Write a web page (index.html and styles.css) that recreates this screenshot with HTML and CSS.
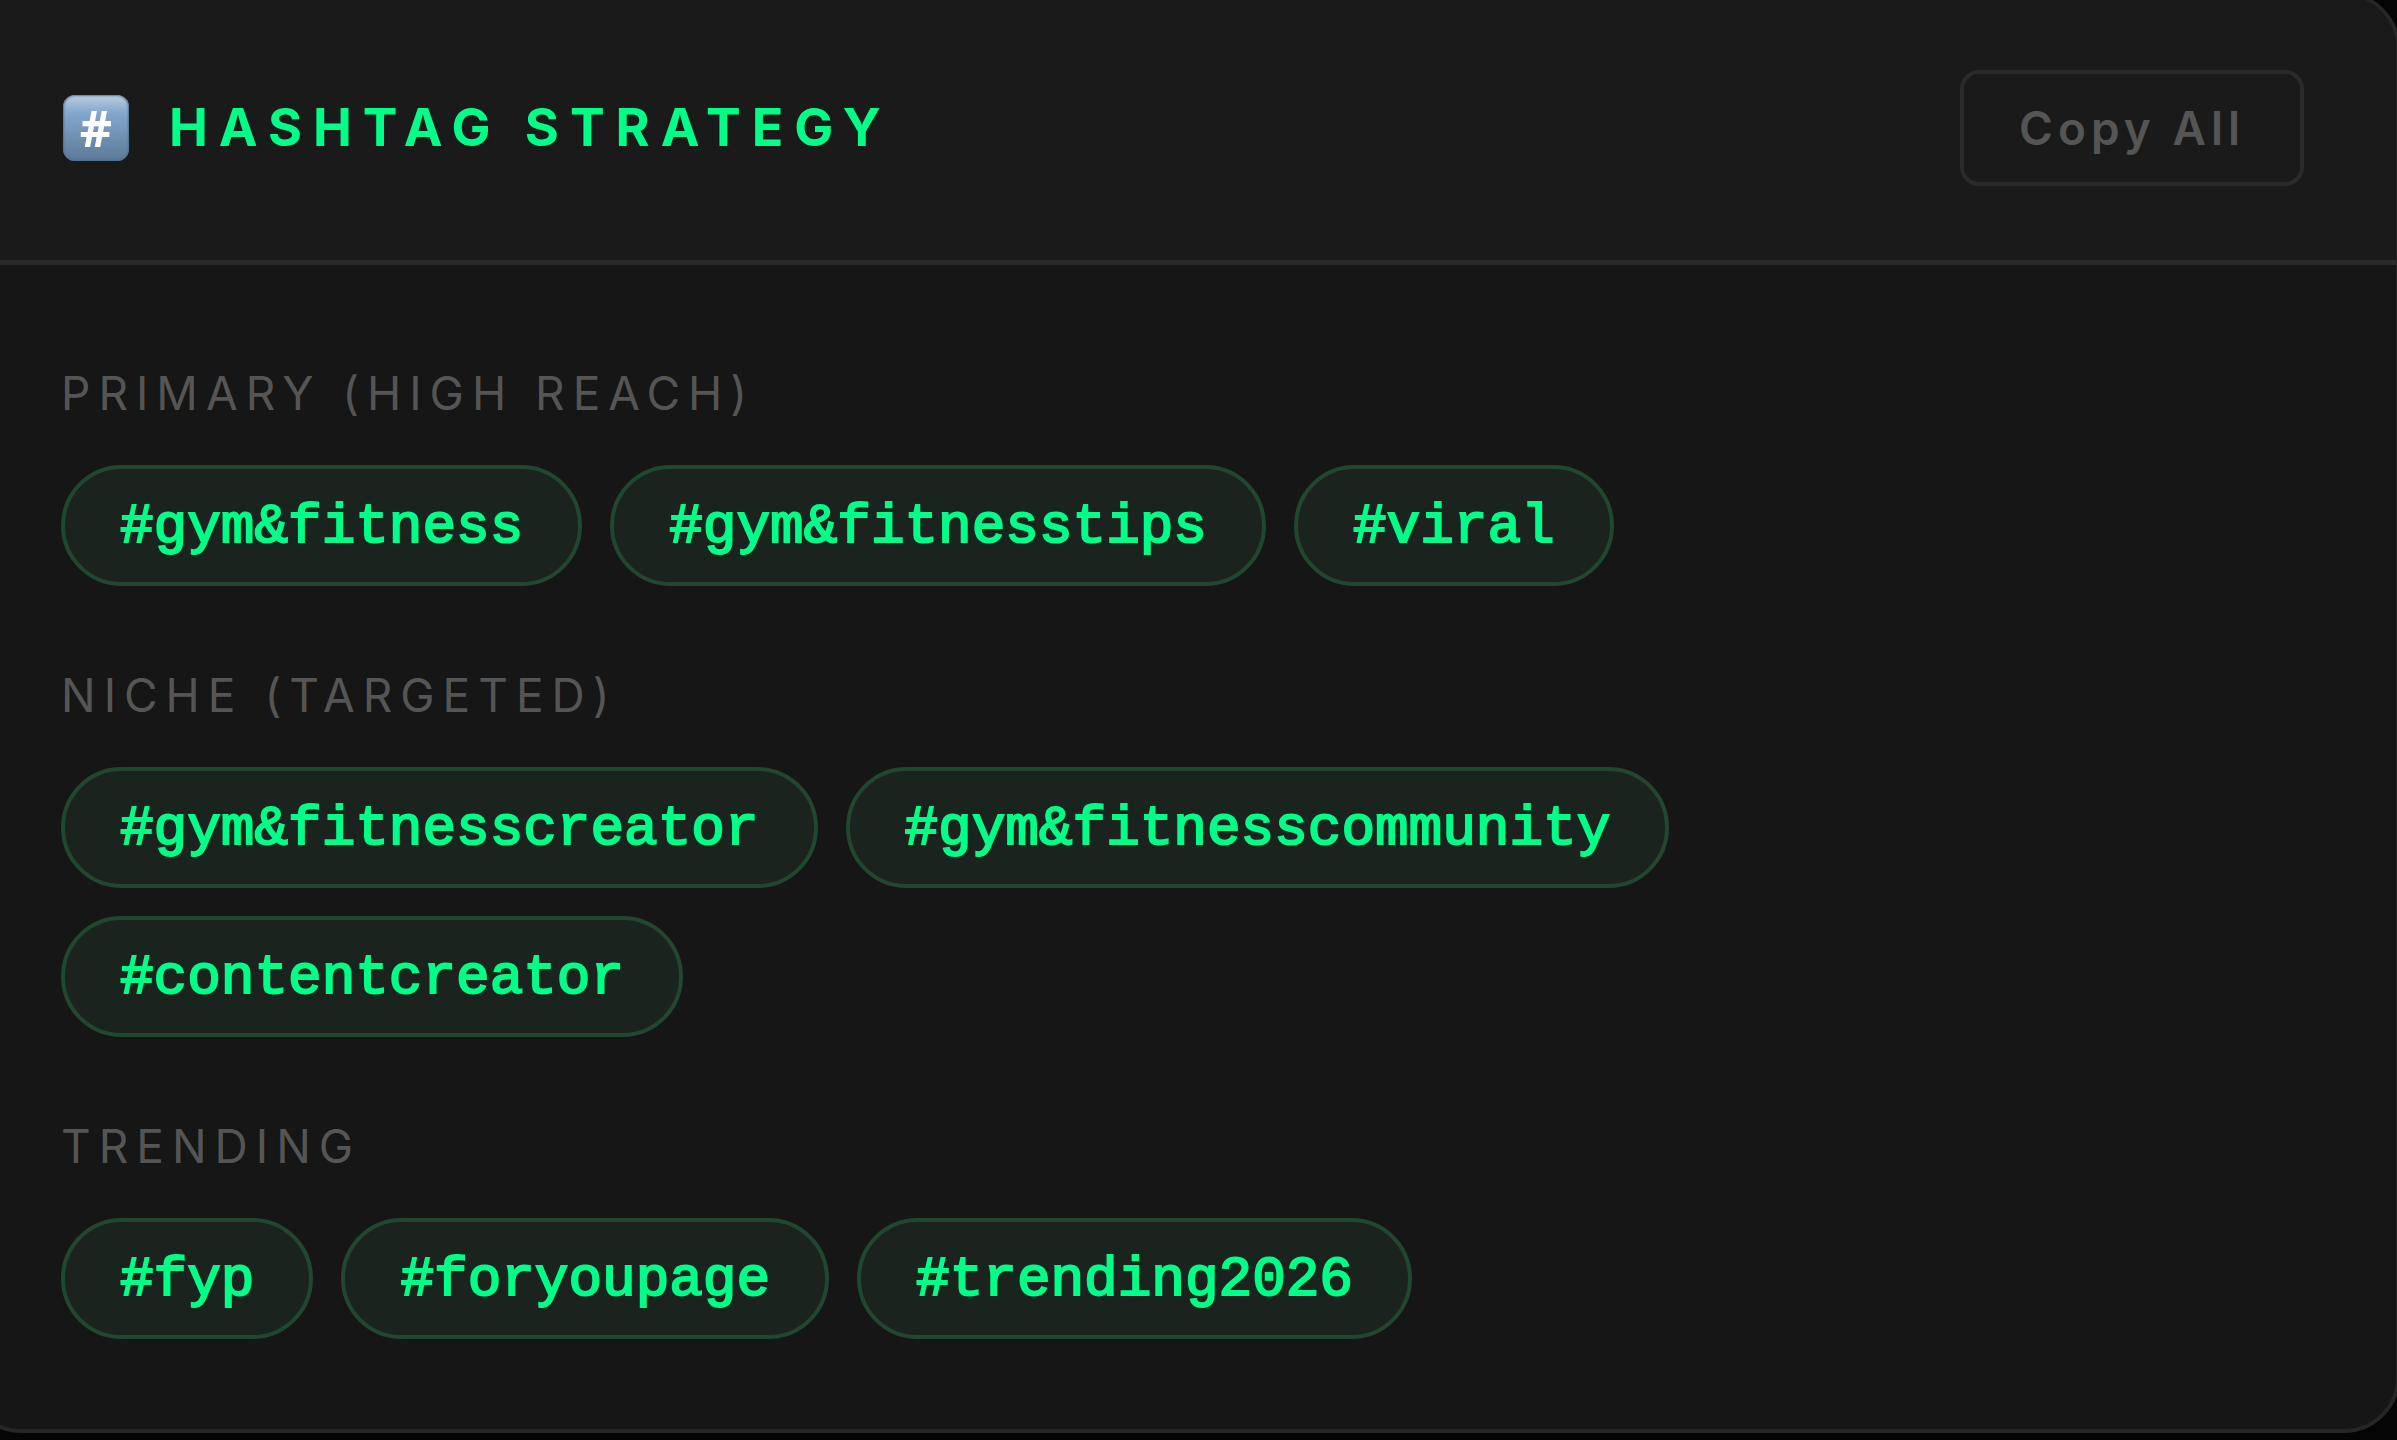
FILE: index.html
```html
<!DOCTYPE html>
<html lang="en">
  <head>
    <meta charset="UTF-8" />
    <title>Hashtag Strategy</title>
    <link rel="stylesheet" href="styles.css">
  </head>

  <body>
    <section class="card">
      <div class="card-header">
        <h2 class="card-title"><span class="keycap">#</span>HASHTAG STRATEGY</h2>
        <button type="button" class="copy-btn">Copy All</button>
      </div>
      <div class="card-body">
        <div class="group">
          <h3 class="group-label">PRIMARY (HIGH REACH)</h3>
          <div class="tags">
            <span class="tag">#gym&amp;fitness</span>
            <span class="tag">#gym&amp;fitnesstips</span>
            <span class="tag">#viral</span>
          </div>
        </div>
        <div class="group">
          <h3 class="group-label">NICHE (TARGETED)</h3>
          <div class="tags">
            <span class="tag">#gym&amp;fitnesscreator</span>
            <span class="tag">#gym&amp;fitnesscommunity</span>
            <span class="tag">#contentcreator</span>
          </div>
        </div>
        <div class="group">
          <h3 class="group-label">TRENDING</h3>
          <div class="tags">
            <span class="tag">#fyp</span>
            <span class="tag">#foryoupage</span>
            <span class="tag">#trending2026</span>
          </div>
        </div>
      </div>
    </section>
  </body>
</html>
```
FILE: styles.css
```css
* {
  box-sizing: border-box;
}

body {
  margin: 0;
  background-color: #050505;
  font-family: Inter, "Liberation Sans", sans-serif;
  overflow: hidden;
}

.card {
  margin: -8px -3px 0 -35px;
  background-color: #161616;
  border: 4px solid #262626;
  border-radius: 56px;
  overflow: hidden;
}

.card-header {
  display: flex;
  align-items: center;
  justify-content: space-between;
  padding: 74px 92px;
  background-color: #1a1a1a;
  border-bottom: 5px solid #2a2a2a;
}

.card-title {
  display: flex;
  align-items: center;
  gap: 40px;
  margin: 0;
  color: #00ff88;
  font-size: 52px;
  font-weight: 700;
  line-height: 68px;
  letter-spacing: 11px;
}

.keycap {
  width: 66px;
  height: 66px;
  margin-left: 2px;
  border-radius: 12px;
  background: linear-gradient(#b9cfe2, #83a5cb 28%, #7899bd 50%, #5b7997);
  box-shadow: inset 0 0 2px 1px #54718f;
  color: #fff;
  font-family: "Open Sans", sans-serif;
  font-size: 50px;
  line-height: 66px;
  letter-spacing: 0;
  text-align: center;
}

.copy-btn {
  height: 116px;
  padding: 0 55px;
  background: none;
  border: 4px solid #2a2a2a;
  border-radius: 19px;
  color: #555;
  font-family: inherit;
  font-size: 46px;
  font-weight: 600;
  letter-spacing: 5px;
  cursor: pointer;
}

.copy-btn:hover {
  color: #00ff88;
  border-color: #00ff88;
}

.card-body {
  display: flex;
  flex-direction: column;
  gap: 74px;
  padding: 93px 92px 90px;
}

.group-label {
  margin: 0 0 37px;
  color: #555;
  font-size: 46px;
  font-weight: 400;
  line-height: 70px;
  letter-spacing: 8px;
}

.tags {
  display: flex;
  flex-wrap: wrap;
  gap: 28px;
}

.tag {
  padding: 4px 55px 0;
  background-color: #1a231e;
  border: 4px solid #20472f;
  border-radius: 93px;
  color: #00ff88;
  font-family: "Liberation Mono", monospace;
  font-size: 56px;
  line-height: 109px;
  -webkit-text-stroke: 2px #00ff88;
}
```
